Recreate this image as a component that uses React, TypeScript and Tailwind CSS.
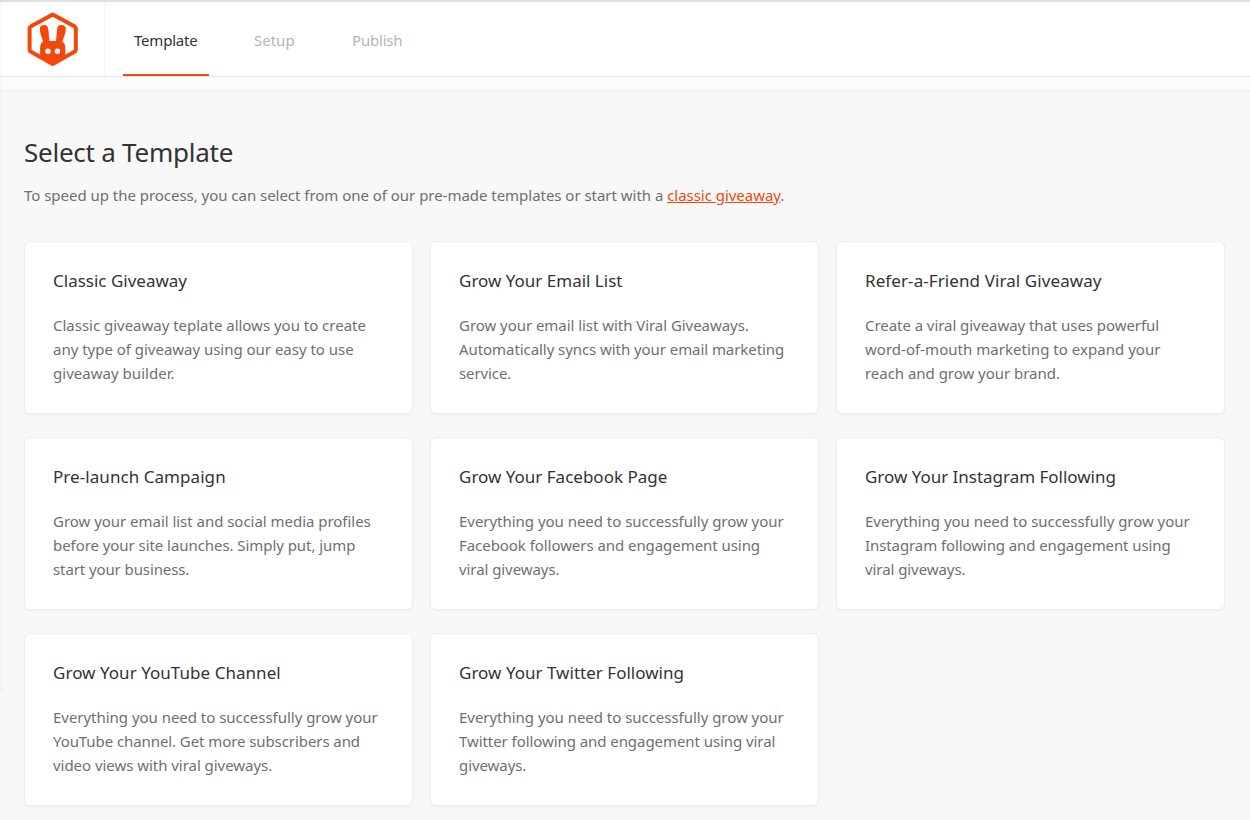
import React from "react";

type Template = { title: string; titleClass: string; lines: [string, string][] };

const templates: Template[] = [
  { title: "Classic Giveaway", titleClass: "", lines: [["Classic giveaway teplate allows you to create", "tracking-[-0.015px]"], ["any type of giveaway using our easy to use", "tracking-[-0.02px]"], ["giveaway builder.", "tracking-[0.03px]"]] },
  { title: "Grow Your Email List", titleClass: "", lines: [["Grow your email list with Viral Giveaways.", "tracking-[-0.045px]"], ["Automatically syncs with your email marketing", "tracking-[-0.065px]"], ["service.", "tracking-[-0.1px]"]] },
  { title: "Refer-a-Friend Viral Giveaway", titleClass: "tracking-[0.09px]", lines: [["Create a viral giveaway that uses powerful", "tracking-[-0.055px]"], ["word-of-mouth marketing to expand your", "tracking-[0.03px]"], ["reach and grow your brand.", "tracking-[-0.03px]"]] },
  { title: "Pre-launch Campaign", titleClass: "tracking-[0.06px]", lines: [["Grow your email list and social media profiles", "tracking-[-0.03px]"], ["before your site launches. Simply put, jump", "tracking-[-0.06px]"], ["start your business.", "tracking-[-0.1px]"]] },
  { title: "Grow Your Facebook Page", titleClass: "", lines: [["Everything you need to successfully grow your", "tracking-[-0.03px]"], ["Facebook followers and engagement using", "tracking-[-0.055px]"], ["viral giveways.", "tracking-[-0.07px]"]] },
  { title: "Grow Your Instagram Following", titleClass: "tracking-[-0.02px]", lines: [["Everything you need to successfully grow your", "tracking-[-0.03px]"], ["Instagram following and engagement using", "tracking-[-0.095px]"], ["viral giveways.", "tracking-[-0.07px]"]] },
  { title: "Grow Your YouTube Channel", titleClass: "tracking-[0.04px]", lines: [["Everything you need to successfully grow your", "tracking-[-0.03px]"], ["YouTube channel. Get more subscribers and", "tracking-[-0.08px]"], ["video views with viral giveways.", "tracking-[-0.04px]"]] },
  { title: "Grow Your Twitter Following", titleClass: "tracking-[0.02px]", lines: [["Everything you need to successfully grow your", "tracking-[-0.03px]"], ["Twitter following and engagement using viral", "tracking-[-0.065px]"], ["giveways.", "tracking-[-0.07px]"]] },
];

function Logo() {
  return (
    <svg width="54" height="56" viewBox="0 0 54 56" fill="#f4470b">
      <path d="M26.7 3.6 L48.8 15.6 Q49.8 16.2 49.8 17.2 V38.7 Q49.8 39.9 48.9 40.4 L26.7 53 L4.5 40.4 Q3.6 39.9 3.6 38.7 V17.2 Q3.6 16.2 4.6 15.6 Z" fill="none" stroke="#f4470b" strokeWidth="4" strokeLinejoin="round" />
      <path d="M14.1 45 V37.5 C14.1 33.5 15.4 31.4 17.2 30.5 C15.6 26.5 13.8 21.5 13.8 18 C13.8 15 15.8 14 18.4 14 C21 14 22 15.6 22.4 19 L23.4 30 H30 L31 19 C31.4 15.6 32.4 14 35 14 C37.7 14 39.8 15 39.8 18 C39.8 21.5 38 26.5 36.3 30.5 C38 31.4 39.3 33.5 39.3 37.5 V45 L26.7 52 Z" />
      <circle cx="22" cy="40.3" r="2.7" fill="#fff" />
      <circle cx="31.4" cy="40.3" r="2.7" fill="#fff" />
    </svg>
  );
}

export default function App() {
  return (
    <div className="relative h-[820px] w-[1250px] overflow-hidden bg-[#f8f8f8] font-['Noto_Sans',sans-serif] text-[#6f6f6f]">
      <div className="absolute top-0 left-0 h-[692px] w-[4px] bg-linear-to-r from-black/3 to-transparent" />
      <header className="flex h-[77px] border-t-2 border-b border-t-[#e0e0e0] border-b-[#e5e5e5] bg-white">
        <div className="flex w-[105px] shrink-0 justify-center border-r border-[#f5f5f5] pt-[9px] pl-[2px]">
          <Logo />
        </div>
        <nav className="flex pl-[18px] text-[15px] leading-[24px] tracking-[-0.2px] whitespace-nowrap text-[#b5b5b5]">
          <a className="h-[74px] w-[86px] border-b-2 border-[#f4470b] pt-[26px] pl-[11px] text-[#333]">Template</a>
          <a className="w-[98px] pt-[26px] pl-[45px] tracking-[0px]">Setup</a>
          <a className="pt-[26px] pl-[45px]">Publish</a>
        </nav>
      </header>
      <div className="h-[14px] border-b border-[#f0f0f0] bg-[#fcfcfc]" />
      <main className="px-6 pt-[43px]">
        <h1 className="text-[26px] leading-[36px] tracking-[-0.24px] text-[#333]">Select a Template</h1>
        <p className="mt-[13px] text-[15px] leading-[24px] tracking-[-0.03px] whitespace-nowrap">
          To speed up the process, you can select from one of our pre-made templates or start with a{" "}
          <a className="text-[#f4470b] underline">classic giveaway</a>.
        </p>
        <div className="mt-[34px] grid grid-cols-[repeat(3,389px)] gap-x-[17px] gap-y-[23px]">
          {templates.map((t) => (
            <article key={t.title} className="h-[173px] rounded-md border border-[#eeeeee] bg-white pt-[26px] pl-[28px] whitespace-nowrap shadow-[0_1px_2px_rgba(0,0,0,0.05)]">
              <h2 className="text-[17px] leading-[26px] text-[#333]"><span className={t.titleClass}>{t.title}</span></h2>
              <p className="mt-[19px] text-[15px] leading-[24px]">
                {t.lines.map(([text, cls]) => (
                  <span key={text} className={"block w-fit " + cls}>{text}</span>
                ))}
              </p>
            </article>
          ))}
        </div>
      </main>
    </div>
  );
}
